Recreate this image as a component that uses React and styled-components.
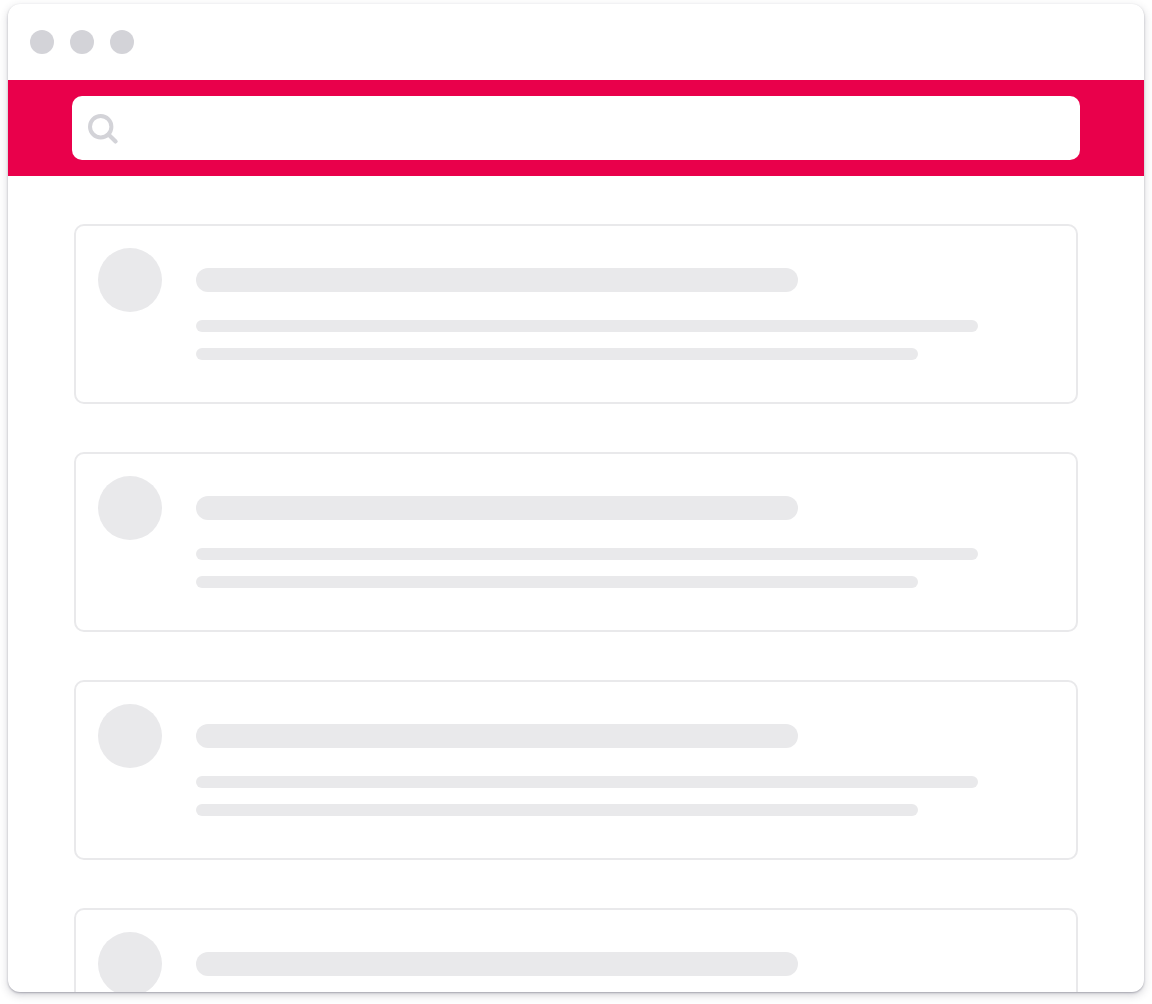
import React from 'react';
import styled, { createGlobalStyle } from 'styled-components';

const GlobalStyle = createGlobalStyle`
  html, body {
    margin: 0;
    padding: 0;
    height: 100%;
    background: #ffffff;
    overflow: hidden;
  }
`;

const Page = styled.div`
  box-sizing: border-box;
  height: 1004px;
  padding: 4px 8px 12px;
`;

const Window = styled.div`
  height: 988px;
  border-radius: 12px;
  background: #ffffff;
  overflow: hidden;
  box-shadow: 0 1px 2px rgba(50, 50, 70, 0.32), 0 3px 9px rgba(50, 50, 70, 0.22);
`;

const TitleBar = styled.div`
  height: 76px;
  box-sizing: border-box;
  padding: 26px 22px 0;
  display: flex;
  gap: 16px;
`;

const Dot = styled.span`
  width: 24px;
  height: 24px;
  border-radius: 50%;
  background: #d3d3d8;
`;

const SearchBand = styled.div`
  background: #e9004b;
  padding: 16px 64px;
`;

const SearchBox = styled.div`
  height: 64px;
  box-sizing: border-box;
  padding-left: 16px;
  border-radius: 10px;
  background: #ffffff;
  display: flex;
  align-items: center;
`;

const List = styled.div`
  padding: 48px 66px 0;
  display: flex;
  flex-direction: column;
  gap: 48px;
`;

const Card = styled.div`
  flex: none;
  height: 180px;
  box-sizing: border-box;
  border: 2px solid #e9e9eb;
  border-radius: 10px;
  padding: 22px;
  display: flex;
  gap: 34px;
`;

const Avatar = styled.div`
  flex: none;
  width: 64px;
  height: 64px;
  border-radius: 50%;
  background: #e9e9eb;
`;

const Lines = styled.div`
  padding-top: 20px;
  display: flex;
  flex-direction: column;
`;

const Title = styled.div`
  width: 602px;
  height: 24px;
  border-radius: 12px;
  background: #e9e9eb;
  margin-bottom: 28px;
`;

const Line = styled.div`
  width: ${(props) => props.$width}px;
  height: 12px;
  border-radius: 6px;
  background: #e9e9eb;
  margin-bottom: 16px;
`;

const SearchIcon = () => (
  <svg width="32" height="34" viewBox="0 0 32 34" fill="none" stroke="#d3d3d8" strokeLinecap="round">
    <circle cx="12.7" cy="15.7" r="10.7" strokeWidth="4" />
    <path d="M21 24L27.6 30.4" strokeWidth="4.2" />
  </svg>
);

const App = () => {
  return (
    <Page>
      <GlobalStyle />
      <Window>
        <TitleBar>
          {[0, 1, 2].map((n) => (
            <Dot key={n} />
          ))}
        </TitleBar>
        <SearchBand>
          <SearchBox>
            <SearchIcon />
          </SearchBox>
        </SearchBand>
        <List>
          {[0, 1, 2, 3].map((n) => (
            <Card key={n}>
              <Avatar />
              <Lines>
                <Title />
                <Line $width={782} />
                <Line $width={722} />
              </Lines>
            </Card>
          ))}
        </List>
      </Window>
    </Page>
  );
};

export default App;
